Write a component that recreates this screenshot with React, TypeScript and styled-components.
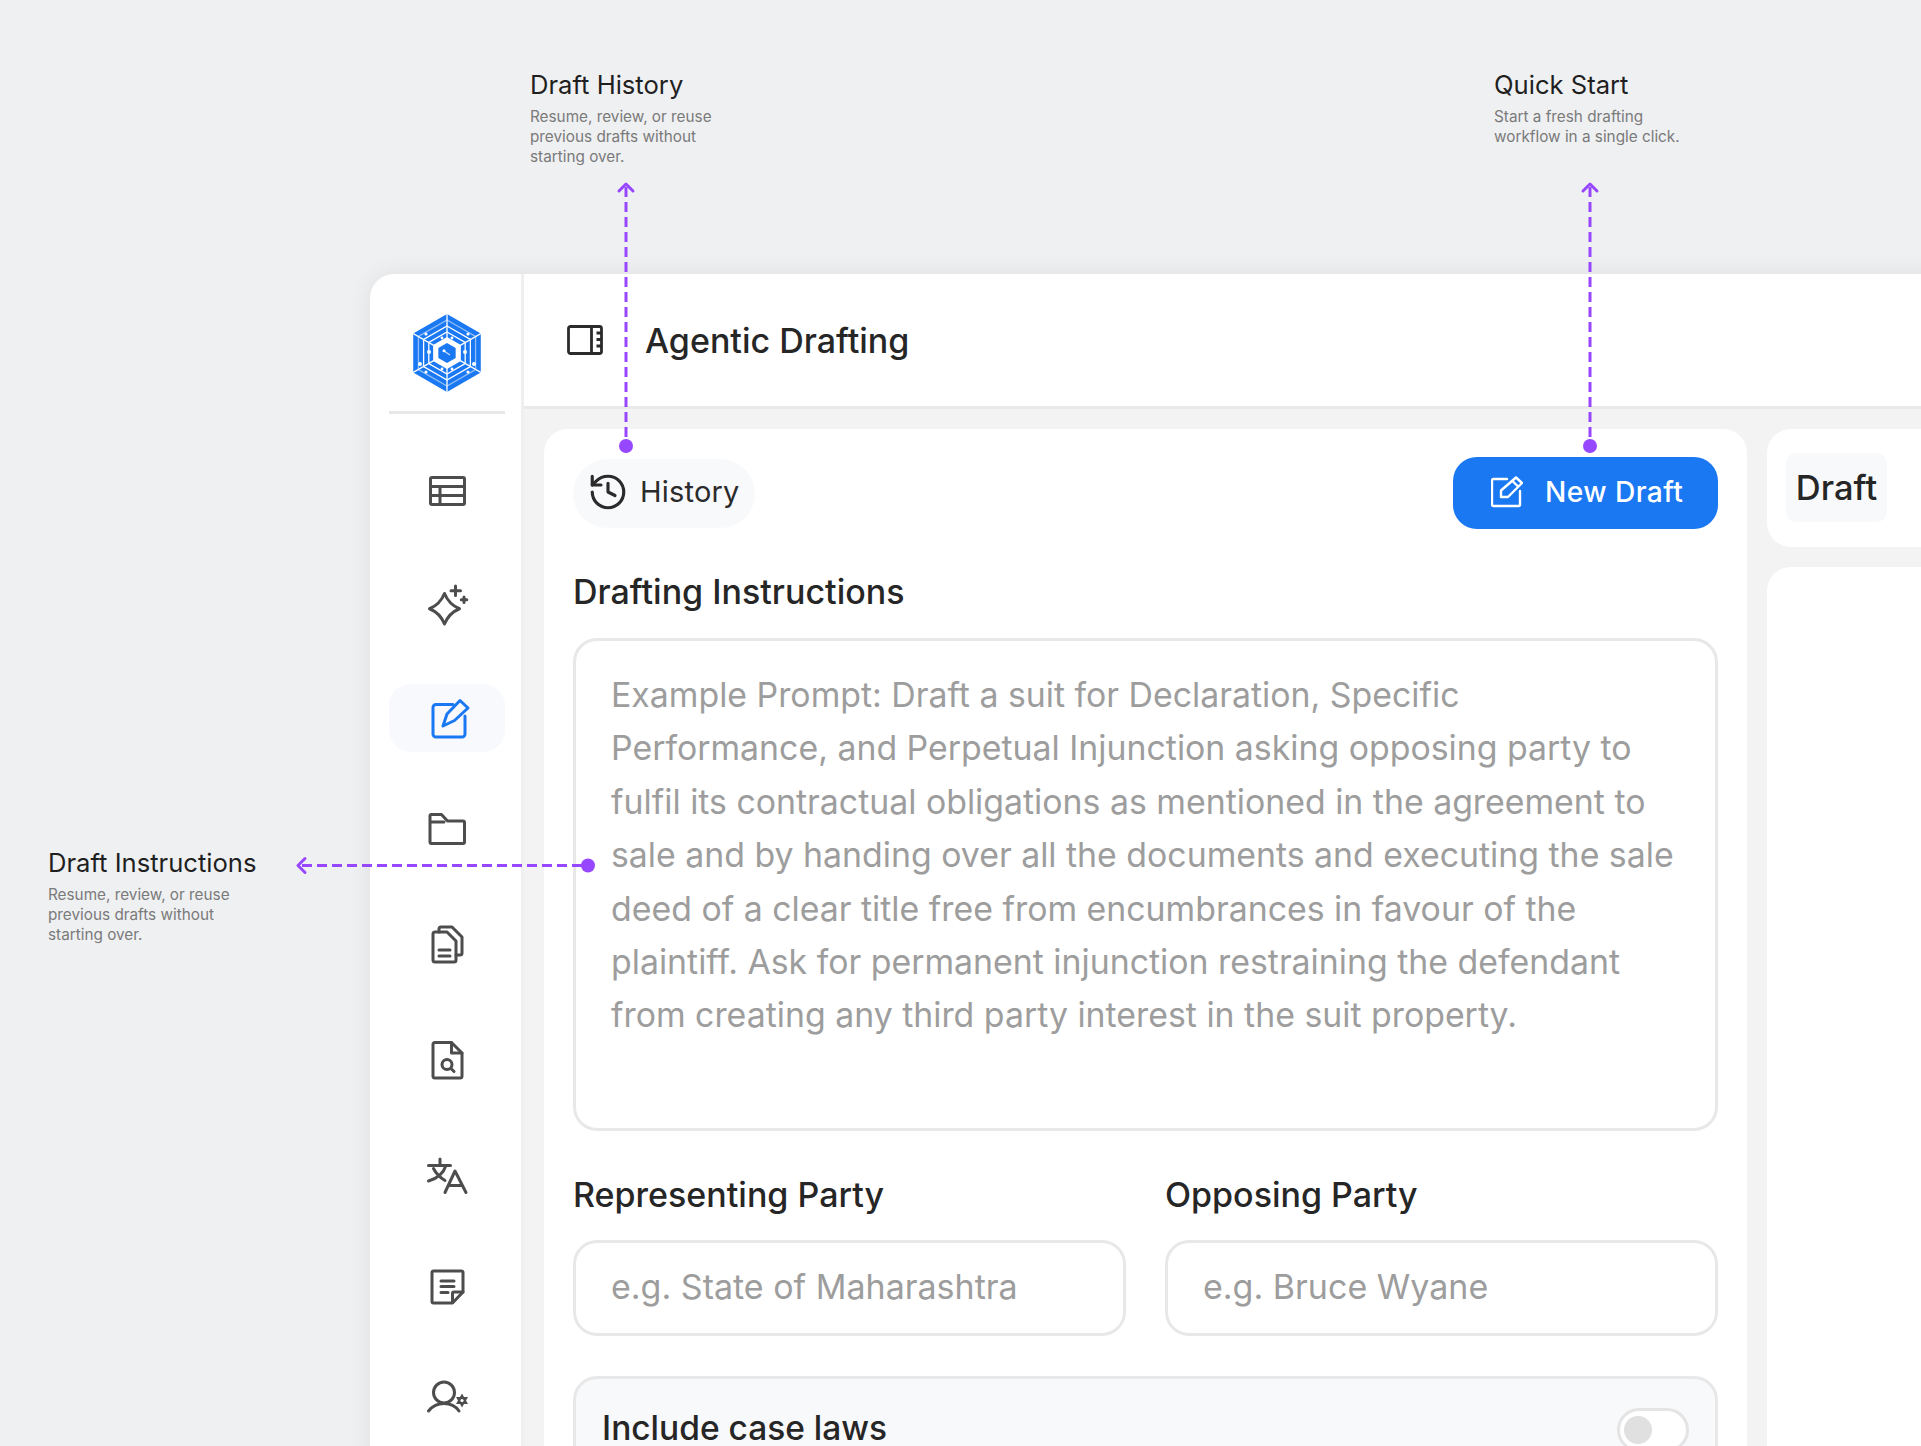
import React from "react";
import styled, { createGlobalStyle } from "styled-components";
import { History } from "lucide-react";

const GlobalStyle = createGlobalStyle`
  html, body {
    margin: 0;
    padding: 0;
    background: #eff0f2;
    font-family: Inter, "Noto Sans", sans-serif;
    color: #1f1f1f;
  }
  * { box-sizing: border-box; }
`;

const Page = styled.div`
  position: relative;
  width: 1921px;
  height: 1446px;
  overflow: hidden;
  padding: 274px 0 0 370px;
  background: #eff0f2;
`;

const Window = styled.div`
  display: flex;
  width: 1600px;
  height: 1300px;
  background: #fff;
  border-radius: 24px 0 0 0;
  box-shadow: 0 0 24px rgba(0, 0, 0, 0.07);
  overflow: hidden;
`;

const Sidebar = styled.aside`
  flex: none;
  width: 154px;
  padding: 0 16px 0 19px;
  border-right: 3px solid #efefef;
  display: flex;
  flex-direction: column;
`;

const LogoWrap = styled.div`
  height: 140px;
  margin-bottom: 43px;
  border-bottom: 3px solid #e8e8e8;
  display: flex;
  align-items: flex-end;
  justify-content: center;
  padding-bottom: 18px;
`;

const Nav = styled.nav`
  display: flex;
  flex-direction: column;
  gap: 45.25px;
`;

const NavItem = styled.div<{ $active?: boolean }>`
  height: 68px;
  border-radius: 22px;
  display: flex;
  align-items: center;
  justify-content: center;
  background: ${(p) => (p.$active ? "#f7f9fc" : "transparent")};
  color: ${(p) => (p.$active ? "#1a78f2" : "#4d4d4d")};
`;

const Main = styled.main`
  flex: 1;
  min-width: 0;
  display: flex;
  flex-direction: column;
  background: #f3f3f4;
`;

const Header = styled.header`
  height: 135px;
  flex: none;
  background: #fff;
  border-bottom: 3px solid #e9e9e9;
  display: flex;
  align-items: center;
  gap: 42px;
  padding: 0 0 0 43px;
  color: #2b2b2b;
`;

const Title = styled.h1`
  margin: 0;
  font-size: 34px;
  font-weight: 450;
  color: #262626;
`;

const Content = styled.div`
  display: flex;
  gap: 20px;
  padding: 20px 0 0 20px;
`;

const FormPanel = styled.section`
  flex: none;
  width: 1203px;
  height: 1200px;
  background: #fff;
  border-radius: 24px 24px 0 0;
  padding: 28px 29px 0;
`;

const SideColumn = styled.div`
  flex: 1;
  display: flex;
  flex-direction: column;
  gap: 20px;
`;

const DraftPanel = styled.div`
  height: 118px;
  background: #fff;
  border-radius: 24px 0 0 24px;
  padding: 24px 19px;
`;

const DraftTab = styled.div`
  width: 101px;
  height: 69px;
  background: #f8f9fb;
  border-radius: 10px;
  display: flex;
  align-items: center;
  justify-content: center;
  font-size: 34.5px;
  font-weight: 450;
  color: #262626;
`;

const OutputPanel = styled.div`
  height: 1000px;
  background: #fff;
  border-radius: 24px 0 0 0;
`;

const Toolbar = styled.div`
  display: flex;
  justify-content: space-between;
  align-items: center;
  height: 72px;
`;

const HistoryPill = styled.button`
  height: 69px;
  width: 182px;
  border: none;
  border-radius: 35px;
  background: #f8f9fb;
  display: flex;
  align-items: center;
  gap: 11px;
  padding: 0 0 3px 14px;
  font: 400 29px Inter, sans-serif;
  letter-spacing: 0.2px;
  color: #2b2b2b;
`;

const PrimaryButton = styled.button`
  width: 265px;
  height: 72px;
  border: none;
  border-radius: 24px;
  background: #1a78f2;
  color: #fff;
  display: flex;
  align-items: center;
  gap: 22px;
  padding: 0 0 3px 38px;
  font: 500 28.2px Inter, sans-serif;
  letter-spacing: 0.4px;
`;

const Label = styled.label`
  display: block;
  height: 40px;
  line-height: 40px;
  font-size: 34px;
  font-weight: 450;
  color: #262626;
`;

const InstructionsLabel = styled(Label)`
  margin: 43px 0 26px;
`;

const PromptBox = styled.div`
  height: 493px;
  border: 3px solid #e8e8e8;
  border-radius: 24px;
  padding: 27px 35px;
  font-size: 33.85px;
  line-height: 53.4px;
  color: #9d9d9d;
  white-space: nowrap;
`;

const PartyGrid = styled.div`
  display: grid;
  grid-template-columns: 553px 553px;
  column-gap: 39px;
  margin-top: 44px;
`;

const Field = styled.div`
  display: flex;
  flex-direction: column;
  gap: 25px;
`;

const TextInput = styled.input`
  height: 96px;
  width: 100%;
  border: 3px solid #e8e8e8;
  border-radius: 24px;
  padding: 0 35px 4px;
  font: 400 34px Inter, sans-serif;
  color: #1f1f1f;
  background: #fff;
  outline: none;
  &::placeholder { color: #9d9d9d; opacity: 1; }
`;

const OptionRow = styled.div`
  margin-top: 40px;
  height: 120px;
  border: 3px solid #e8e8e8;
  border-radius: 24px;
  background: #f8f9fb;
  padding: 26px 26px 0;
  display: flex;
  justify-content: space-between;
  align-items: flex-start;
`;

const OptionTitle = styled.span`
  font-size: 33.5px;
  font-weight: 450;
  line-height: 46px;
  color: #262626;
`;

const Switch = styled.span`
  width: 72px;
  height: 44px;
  border: 3px solid #e4e4e4;
  border-radius: 22px;
  background: #fff;
  padding: 5px 4px;
  margin-top: 3px;
  display: block;
`;

const SwitchKnob = styled.span`
  display: block;
  width: 28px;
  height: 28px;
  border-radius: 50%;
  background: #e0e0e0;
`;

const Note = styled.div<{ $x: number; $y: number }>`
  position: absolute;
  left: ${(p) => p.$x}px;
  top: ${(p) => p.$y}px;
  width: 240px;
`;

const NoteTitle = styled.div`
  font-size: 25.6px;
  line-height: 32px;
  color: #1f1f1f;
  white-space: nowrap;
  margin-bottom: 6px;
`;

const NoteText = styled.div`
  font-size: 15.3px;
  line-height: 20px;
  color: #7a7a7a;
  white-space: pre-line;
`;

const Callouts = styled.svg`
  position: absolute;
  inset: 0;
  pointer-events: none;
`;

const hexPoints = (r: number) =>
  [
    [0, -r],
    [0.866 * r, -r / 2],
    [0.866 * r, r / 2],
    [0, r],
    [-0.866 * r, r / 2],
    [-0.866 * r, -r / 2],
  ]
    .map((p) => p.join(","))
    .join(" ");

const Logo = () => (
  <svg width="68" height="80" viewBox="-34 -40 68 80">
    <polygon points={hexPoints(39)} fill="#1a78f2" />
    <g fill="none" stroke="#fff" strokeWidth="1.3">
      <polygon points={hexPoints(33)} stroke="#8fbdf8" />
      <polygon points={hexPoints(27)} />
      <polygon points={hexPoints(21)} />
      <line x1="0" y1="-39" x2="0" y2="39" />
      <line x1="-33.8" y1="-19.5" x2="33.8" y2="19.5" />
      <line x1="-33.8" y1="19.5" x2="33.8" y2="-19.5" />
    </g>
    <polygon points={hexPoints(16)} fill="#fff" />
    <polygon points={hexPoints(10)} fill="#1a78f2" />
    <path d="M-3-2 3 2" stroke="#cfe3fc" strokeWidth="1.2" />
    <circle cx="-3" cy="-2.2" r="1.5" fill="#fff" />
    <g fill="#fff">
      <circle cx="-18" cy="-1" r="2" />
      <circle cx="18" cy="-1" r="2" />
      <circle cx="-27" cy="11" r="2" />
      <circle cx="27" cy="11" r="2" />
      <circle cx="-21" cy="-19" r="1.6" />
      <circle cx="21" cy="-19" r="1.6" />
      <circle cx="-5" cy="-15" r="1.4" />
      <circle cx="5" cy="-15" r="1.4" />
      <circle cx="-5" cy="16" r="1.4" />
      <circle cx="5" cy="16" r="1.4" />
      <circle cx="-21" cy="19" r="1.6" />
      <circle cx="21" cy="19" r="1.6" />
    </g>
  </svg>
);

const GlyphSvg = styled.svg`
  overflow: visible;
  flex: none;
`;

const Glyph = ({ children }: { children: React.ReactNode }) => (
  <GlyphSvg
    width="40"
    height="40"
    viewBox="0 0 40 40"
    fill="none"
    stroke="currentColor"
    strokeWidth="3"
    strokeLinecap="round"
    strokeLinejoin="round"
  >
    {children}
  </GlyphSvg>
);

const TableIcon = () => (
  <Glyph>
    <rect x="3.500" y="6.500" width="34" height="27" rx="1.500" />
    <path d="M3.500 15.500h34M3.500 24.500h34M13 15.500v18" />
  </Glyph>
);

const SparkIcon = () => (
  <Glyph>
    <path d="M17.500 9.500Q22 20.500 32.500 24.750 22 29 17.500 40 13 29 2.500 24.750 13 20.500 17.500 9.500Z" />
    <path d="M28.500 2v9.500M24 6.750h9.500M37 13v5.500M34.300 15.750h5.500" />
  </Glyph>
);

const EditIcon = () => (
  <Glyph>
    <path d="M26 6.500H9a3 3 0 0 0-3 3V36a3 3 0 0 0 3 3h26a3 3 0 0 0 3-3V18" />
    <path d="M33 2.500 41 10 27.500 22.500 16 28l4-12L33 2.500Z" />
  </Glyph>
);

const FolderIcon = () => (
  <Glyph>
    <path d="M3 31V5a1.500 1.500 0 0 1 1.500-1.500h10l6 6.500h15.500A1.500 1.500 0 0 1 37.500 11.500V31a1.500 1.500 0 0 1-1.500 1.500H4.500A1.500 1.500 0 0 1 3 31ZM3 11h14" />
  </Glyph>
);

const DocsIcon = () => (
  <Glyph>
    <path d="M12 8V5a2 2 0 0 1 2-2h11l10 10v16a2 2 0 0 1-2 2h-4" />
    <path d="M6 10a2 2 0 0 1 2-2h12l9 9v19a2 2 0 0 1-2 2H8a2 2 0 0 1-2-2V10Z" />
    <path d="M12 26h11M12 32h11" />
  </Glyph>
);

const FileSearchIcon = () => (
  <Glyph>
    <path d="M6 7.500a2 2 0 0 1 2-2h16.500L35 16v23a2 2 0 0 1-2 2H8a2 2 0 0 1-2-2V7.500Z" />
    <path d="M24.500 5.500V16H35" />
    <circle cx="20" cy="27.500" r="5" />
    <path d="m24 31.500 3 3" />
  </Glyph>
);

const TranslateIcon = () => (
  <Glyph>
    <path d="M1.500 14.500h22M13 8v6.500M19 14.500C16.500 22 10.500 27.500 1.500 30M6.500 17.500c2.500 5 6.500 9 11.500 12" />
    <path d="m18 41.500 10-21.500 11 21.500M21.500 34.500h14" />
  </Glyph>
);

const NoteIcon = () => (
  <Glyph>
    <path d="M5 8.500A1.500 1.500 0 0 1 6.500 7h28A1.500 1.500 0 0 1 36 8.500V28L25.500 39H6.500A1.500 1.500 0 0 1 5 37.500V8.500Z" />
    <path d="M25.500 38.500V29.500a1.500 1.500 0 0 1 1.500-1.500h9M14 17h13M14 22.500h13M14 28.500h7" />
  </Glyph>
);

const UserGearIcon = () => (
  <Glyph>
    <circle cx="17" cy="15.500" r="10.500" />
    <path d="M1.500 34c4-5 9-7.500 15.500-7.500S28.500 29 32 34" />
    <g fill="currentColor" stroke="none">
      <path d="M35 16.500l2 3.500h4l-2 3.500 2 3.500h-4l-2 3.500-2-3.500h-4l2-3.500-2-3.500h4Z" />
    </g>
    <circle cx="35" cy="23.500" r="1.600" fill="#fff" stroke="none" />
  </Glyph>
);

const PanelIcon = () => (
  <svg width="36" height="30" viewBox="0 0 36 30" fill="none" stroke="currentColor" strokeWidth="2.800" strokeLinejoin="round">
    <rect x="1.500" y="1.500" width="33" height="27" rx="2" />
    <path d="M24.500 1.500v27M29.500 8h5M29.500 14.500h5M29.500 21h5" />
  </svg>
);

const ComposeIcon = () => (
  <svg width="32" height="32" viewBox="0 0 32 32" fill="none" stroke="#fff" strokeWidth="2.400" strokeLinejoin="round" strokeLinecap="round">
    <path d="M16 3H2.500A1.500 1.500 0 0 0 1 4.500v24A1.500 1.500 0 0 0 2.500 30h25a1.500 1.500 0 0 0 1.500-1.500V15" />
    <path d="M25 1.500 31 7 17 21H10v-6.500L25 1.500ZM21.500 5l5.500 5.500" />
  </svg>
);

const accent = "#9747ff";

const App = () => (
  <>
    <GlobalStyle />
    <Page>
      <Window>
        <Sidebar>
          <LogoWrap>
            <Logo />
          </LogoWrap>
          <Nav>
            <NavItem><TableIcon /></NavItem>
            <NavItem><SparkIcon /></NavItem>
            <NavItem $active><EditIcon /></NavItem>
            <NavItem><FolderIcon /></NavItem>
            <NavItem><DocsIcon /></NavItem>
            <NavItem><FileSearchIcon /></NavItem>
            <NavItem><TranslateIcon /></NavItem>
            <NavItem><NoteIcon /></NavItem>
            <NavItem><UserGearIcon /></NavItem>
          </Nav>
        </Sidebar>
        <Main>
          <Header>
            <PanelIcon />
            <Title>Agentic Drafting</Title>
          </Header>
          <Content>
            <FormPanel>
              <Toolbar>
                <HistoryPill>
                  <History size={42} strokeWidth={1.8} />
                  History
                </HistoryPill>
                <PrimaryButton>
                  <ComposeIcon />
                  New Draft
                </PrimaryButton>
              </Toolbar>
              <InstructionsLabel>Drafting Instructions</InstructionsLabel>
              <PromptBox>
                Example Prompt: Draft a suit for Declaration, Specific
                <br />
                Performance, and Perpetual Injunction asking opposing party to
                <br />
                fulfil its contractual obligations as mentioned in the agreement to
                <br />
                sale and by handing over all the documents and executing the sale
                <br />
                deed of a clear title free from encumbrances in favour of the
                <br />
                plaintiff. Ask for permanent injunction restraining the defendant
                <br />
                from creating any third party interest in the suit property.
              </PromptBox>
              <PartyGrid>
                <Field>
                  <Label>Representing Party</Label>
                  <TextInput placeholder="e.g. State of Maharashtra" />
                </Field>
                <Field>
                  <Label>Opposing Party</Label>
                  <TextInput placeholder="e.g. Bruce Wyane" />
                </Field>
              </PartyGrid>
              <OptionRow>
                <OptionTitle>Include case laws</OptionTitle>
                <Switch>
                  <SwitchKnob />
                </Switch>
              </OptionRow>
            </FormPanel>
            <SideColumn>
              <DraftPanel>
                <DraftTab>Draft</DraftTab>
              </DraftPanel>
              <OutputPanel />
            </SideColumn>
          </Content>
        </Main>
      </Window>

      <Note $x={530} $y={69}>
        <NoteTitle>Draft History</NoteTitle>
        <NoteText>{"Resume, review, or reuse\nprevious drafts without\nstarting over."}</NoteText>
      </Note>
      <Note $x={1494} $y={69}>
        <NoteTitle>Quick Start</NoteTitle>
        <NoteText>{"Start a fresh drafting\nworkflow in a single click."}</NoteText>
      </Note>
      <Note $x={48} $y={847}>
        <NoteTitle>Draft Instructions</NoteTitle>
        <NoteText>{"Resume, review, or reuse\nprevious drafts without\nstarting over."}</NoteText>
      </Note>

      <Callouts width="1921" height="1446" viewBox="0 0 1921 1446" fill="none">
        <g stroke={accent} strokeWidth="3" strokeDasharray="10 5">
          <line x1="626" y1="187" x2="626" y2="440" />
          <line x1="1590" y1="187" x2="1590" y2="440" />
          <line x1="302" y1="865.500" x2="582" y2="865.500" />
        </g>
        <g stroke={accent} strokeWidth="3" strokeLinecap="round" strokeLinejoin="round">
          <path d="M619 191l7-7 7 7" />
          <path d="M1583 191l7-7 7 7" />
          <path d="M305 858.500l-7 7 7 7" />
        </g>
        <g fill={accent}>
          <circle cx="626" cy="446" r="7" />
          <circle cx="1590" cy="446" r="7" />
          <circle cx="588" cy="865.500" r="7" />
        </g>
      </Callouts>
    </Page>
  </>
);

export default App;
